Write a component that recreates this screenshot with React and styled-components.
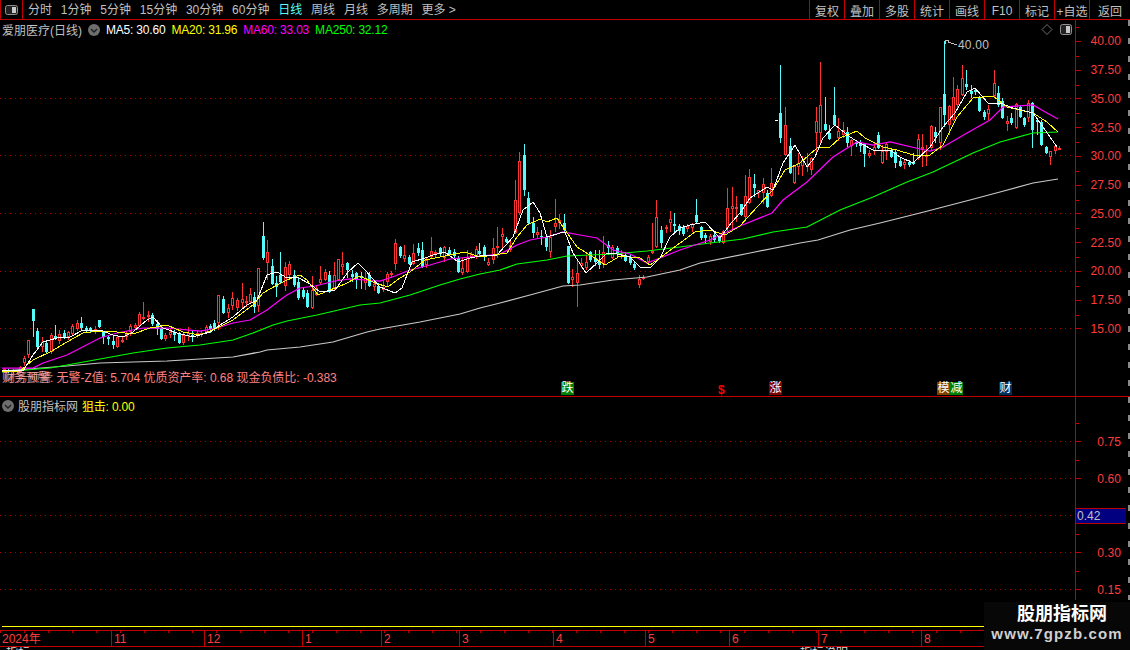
import React from 'react';
import styled, { createGlobalStyle } from 'styled-components';

const RED = '#c00000';
const TEXT_RED = '#ff3c3c';
const GREY = '#c0c0c0';

const GlobalStyle = createGlobalStyle`
  html, body {
    margin: 0;
    background: #000;
    overflow: hidden;
  }
  body {
    font-family: "Liberation Sans", "Noto Sans CJK SC", sans-serif;
    font-size: 12px;
  }
`;

const Page = styled.div`
  width: 1130px;
  height: 650px;
  position: relative;
  overflow: hidden;
  background: #000;
  color: ${GREY};
`;

const Toolbar = styled.div`
  display: flex;
  align-items: stretch;
  height: 19px;
  border-bottom: 1px solid ${RED};
`;

const ToggleCell = styled.div`
  width: 23px;
  display: flex;
  align-items: center;
  justify-content: center;
  border-right: 1px solid ${RED};
  border-left: 1px solid ${RED};
  box-sizing: border-box;
  margin-right: 5px;
`;

const Tabs = styled.div`
  display: flex;
  align-items: center;
  gap: 8.8px;
  flex: 1;
  padding-top: 2px;
`;

const Tab = styled.span`
  line-height: 17px;
  white-space: nowrap;
  color: ${p => (p.$active ? '#54fcfc' : GREY)};
`;

const ToolButton = styled.div`
  width: 35px;
  box-sizing: border-box;
  display: flex;
  align-items: center;
  justify-content: center;
  padding-top: 2px;
  border-left: 1px solid ${RED};
  white-space: nowrap;
  &:last-child {
    width: 41px;
  }
`;

const PanelRow = styled.div`
  display: flex;
  height: ${p => p.$height}px;
  border-bottom: ${p => (p.$line ? `1px solid ${RED}` : 'none')};
`;

const ChartArea = styled.div`
  width: 1075px;
  position: relative;
  flex: none;
`;

const ChartSvg = styled.svg`
  display: block;
  width: 100%;
  height: 100%;
`;

const Axis = styled.div`
  flex: 1;
  box-sizing: border-box;
  display: flex;
  flex-direction: column;
  padding-top: ${p => p.$top}px;
  border-left: 1px solid ${RED};
  background: repeating-linear-gradient(to bottom, #8a8a8a 0 6px, transparent 6px 18px) right top / 2px 100% no-repeat;
`;

const AxisRow = styled.div`
  flex: none;
  height: ${p => p.$height}px;
  display: flex;
  align-items: center;
  padding-right: 9px;
  color: ${TEXT_RED};
  letter-spacing: 0.1px;
  background: linear-gradient(${RED}, ${RED}) left top / 3px 1px no-repeat;
  &::before {
    content: '';
    width: 5px;
    height: 1px;
    background: ${RED};
    margin-right: auto;
  }
`;

const CurrentRow = styled.div`
  flex: none;
  height: 37px;
  display: flex;
  align-items: center;
`;

const CurrentValue = styled.div`
  flex: 1;
  height: 16px;
  margin-right: 4px;
  box-sizing: border-box;
  line-height: 14px;
  padding-left: 1px;
  background: #000080;
  border-top: 1px solid ${RED};
  border-bottom: 1px solid ${RED};
  color: ${GREY};
`;

const Legend = styled.div`
  position: absolute;
  left: ${p => p.$left}px;
  top: ${p => p.$top}px;
  display: flex;
  align-items: center;
  gap: ${p => p.$gap}px;
  white-space: nowrap;
  letter-spacing: -0.2px;
`;

const Title = styled.span`
  color: ${GREY};
  letter-spacing: 0;
`;

const Value = styled.span`
  color: ${p => p.$color};
`;

const FinanceLine = styled.div`
  position: absolute;
  left: 2px;
  top: 348px;
  color: #ff8080;
  white-space: nowrap;
  letter-spacing: -0.03px;
`;

const FinanceGhost = styled.span`
  position: absolute;
  left: 2px;
  top: 0;
  color: #f0d0d0;
  opacity: 0.6;
`;

const Signal = styled.span`
  position: absolute;
  left: ${p => p.$x}px;
  top: 362px;
  width: 13px;
  height: 13px;
  line-height: 13px;
  text-align: center;
  color: #fff;
  background: ${p => p.$bg};
`;

const Dollar = styled.span`
  position: absolute;
  left: 718px;
  top: 364px;
  color: #ff0000;
  font-size: 12px;
  line-height: 13px;
  font-weight: bold;
`;

const Spacer = styled.div`
  height: ${p => p.$height}px;
`;

const YellowLine = styled.div`
  height: 1px;
  margin: 0 0 3px 2px;
  background: #ffff00;
`;

const TimeAxis = styled.div`
  display: flex;
  height: 15px;
  border-top: 1px solid ${RED};
  border-bottom: 1px solid ${RED};
  color: ${TEXT_RED};
  background: repeating-linear-gradient(to right, ${RED} 0 1px, transparent 1px 24px) left top / 100% 2px no-repeat;
`;

const TimeCell = styled.div`
  box-sizing: border-box;
  flex: none;
  width: ${p => p.$width}px;
  line-height: 16px;
  padding-left: 2px;
  border-left: ${p => (p.$first ? 'none' : `1px solid ${RED}`)};
`;

const TailRow = styled.div`
  height: 3px;
  overflow: hidden;
  display: flex;
  gap: 770px;
  padding-left: 6px;
  line-height: 12px;
  color: #d8d8d8;
`;

const Watermark = styled.div`
  position: absolute;
  right: 0;
  bottom: 0;
  width: 146px;
  height: 48px;
  background: #070707;
  display: flex;
  flex-direction: column;
  align-items: center;
  font-weight: bold;
`;

const WatermarkName = styled.div`
  color: #fff;
  font-size: 18px;
  line-height: 22px;
  margin: 1px 0 0 10px;
`;

const WatermarkUrl = styled.div`
  color: #d0d0d0;
  font-size: 15px;
  line-height: 18px;
  letter-spacing: 1.1px;
`;

// [x, high, bodyTop, bodyBottom, low, up]
const candles = [
  [4, 368, 369, 372, 373, 1], [8, 369, 370, 372, 373, 0], [13, 369, 370, 372, 374, 1], [17, 370, 370, 372, 373, 1], [20, 366, 367, 372, 373, 1],
  [24, 356, 358, 363, 366, 1], [28, 340, 340, 355, 358, 1], [33, 309, 309, 321, 337, 0], [37, 328, 331, 347, 348, 0],
  [42, 337, 342, 347, 352, 1], [46, 340, 343, 352, 354, 0], [51, 333, 335, 352, 354, 1], [55, 325, 336, 339, 340, 0],
  [59, 330, 334, 341, 344, 1], [64, 330, 333, 337, 339, 0], [68, 331, 332, 337, 340, 1], [72, 324, 326, 334, 335, 1],
  [77, 320, 323, 329, 331, 1], [81, 317, 323, 328, 331, 0], [86, 326, 328, 330, 333, 0], [90, 327, 328, 331, 332, 0],
  [95, 326, 329, 330, 334, 1], [99, 320, 320, 327, 328, 0], [103, 331, 332, 337, 344, 0], [108, 335, 337, 339, 345, 0],
  [113, 336, 341, 345, 349, 0], [117, 336, 337, 347, 348, 1], [122, 337, 340, 341, 343, 1], [126, 331, 334, 337, 340, 1],
  [130, 324, 326, 332, 336, 1], [135, 323, 325, 328, 330, 1], [139, 312, 314, 326, 327, 1], [143, 302, 317, 318, 320, 1],
  [148, 311, 315, 317, 322, 1], [152, 313, 315, 324, 326, 0], [157, 320, 324, 329, 335, 0], [161, 325, 328, 339, 340, 0],
  [165, 333, 335, 339, 341, 1], [170, 329, 332, 335, 338, 1], [174, 330, 332, 335, 341, 0], [179, 332, 333, 343, 344, 0],
  [183, 332, 335, 343, 345, 1], [188, 327, 333, 336, 341, 1], [192, 330, 335, 336, 342, 0], [197, 330, 333, 335, 338, 1],
  [201, 331, 333, 335, 337, 1], [206, 325, 327, 332, 334, 1], [210, 324, 326, 329, 333, 0], [214, 320, 323, 329, 331, 0],
  [218, 295, 295, 323, 330, 1], [223, 296, 299, 313, 314, 0], [228, 304, 308, 313, 318, 1], [232, 292, 298, 306, 310, 1],
  [237, 298, 300, 308, 311, 1], [242, 283, 299, 303, 308, 1], [246, 296, 301, 303, 307, 1], [250, 288, 294, 302, 304, 1],
  [254, 292, 297, 307, 313, 0], [258, 268, 268, 306, 312, 1], [263, 222, 236, 258, 260, 0], [267, 240, 252, 263, 280, 1],
  [272, 259, 266, 284, 285, 0], [276, 276, 283, 287, 297, 0], [280, 252, 275, 282, 284, 0], [285, 262, 267, 286, 291, 1],
  [289, 261, 264, 275, 280, 1], [294, 270, 275, 285, 287, 0], [298, 277, 282, 298, 300, 0], [303, 288, 290, 297, 299, 0],
  [307, 290, 293, 307, 308, 0], [312, 276, 290, 308, 309, 1], [316, 285, 288, 295, 296, 1], [320, 266, 279, 283, 284, 1],
  [325, 269, 272, 280, 281, 1], [329, 271, 275, 292, 293, 0], [334, 262, 275, 288, 290, 1], [338, 259, 259, 280, 281, 1],
  [342, 252, 264, 267, 275, 1], [347, 262, 263, 270, 278, 0], [352, 270, 274, 277, 282, 0], [356, 272, 273, 280, 289, 0],
  [361, 272, 276, 278, 289, 0], [365, 272, 278, 283, 290, 1], [369, 272, 275, 286, 287, 0], [374, 282, 284, 287, 291, 1],
  [378, 283, 286, 293, 294, 0], [383, 280, 287, 290, 292, 1], [387, 272, 274, 282, 286, 1], [391, 271, 273, 275, 278, 1],
  [395, 239, 243, 264, 270, 1], [400, 246, 247, 256, 258, 0], [404, 245, 255, 259, 262, 1], [409, 255, 257, 264, 265, 0],
  [413, 244, 253, 264, 265, 1], [418, 243, 248, 253, 256, 0], [422, 242, 250, 267, 268, 0], [426, 258, 260, 265, 268, 1],
  [431, 237, 251, 257, 259, 1], [435, 250, 252, 254, 258, 1], [440, 247, 248, 254, 257, 0], [444, 246, 247, 258, 262, 1],
  [449, 247, 250, 254, 256, 0], [454, 249, 252, 256, 258, 0], [458, 256, 258, 272, 273, 0], [462, 258, 268, 273, 275, 1],
  [467, 250, 257, 272, 273, 1], [471, 252, 254, 257, 259, 1], [476, 246, 249, 257, 259, 1], [479, 243, 251, 254, 257, 0],
  [484, 245, 247, 257, 261, 0], [488, 258, 262, 265, 266, 1], [493, 238, 248, 260, 264, 1], [497, 227, 246, 248, 258, 1],
  [502, 228, 234, 237, 248, 1], [506, 237, 239, 242, 243, 0], [510, 240, 245, 250, 252, 1], [515, 180, 200, 233, 234, 1],
  [519, 152, 161, 213, 215, 1], [524, 144, 155, 190, 196, 0], [528, 192, 198, 223, 224, 0], [533, 217, 223, 233, 238, 0],
  [537, 227, 232, 235, 238, 1], [541, 230, 236, 237, 245, 0], [546, 235, 237, 247, 251, 0], [550, 230, 237, 252, 258, 1],
  [555, 199, 223, 227, 232, 1], [559, 214, 220, 223, 229, 1], [564, 214, 223, 230, 232, 0], [568, 246, 246, 283, 284, 0],
  [572, 269, 277, 280, 287, 1], [577, 260, 273, 283, 307, 1], [581, 258, 263, 266, 268, 1], [586, 255, 262, 268, 270, 1],
  [590, 251, 252, 260, 262, 0], [595, 250, 258, 262, 266, 0], [599, 250, 262, 265, 269, 0], [603, 236, 252, 264, 268, 1],
  [608, 241, 245, 248, 255, 0], [612, 245, 247, 258, 259, 1], [617, 246, 248, 254, 257, 0], [621, 250, 253, 255, 259, 1],
  [625, 252, 255, 261, 262, 0], [630, 254, 257, 263, 265, 0], [634, 262, 264, 268, 270, 0], [639, 275, 279, 285, 288, 1],
  [643, 275, 277, 279, 280, 1], [648, 255, 257, 262, 265, 1], [652, 223, 251, 253, 254, 1], [656, 200, 217, 247, 248, 1],
  [661, 226, 230, 243, 248, 0], [666, 225, 227, 229, 233, 1], [670, 211, 219, 223, 232, 1], [674, 213, 224, 226, 232, 0],
  [679, 224, 226, 231, 235, 0], [683, 225, 227, 234, 236, 0], [687, 224, 226, 229, 232, 1], [692, 223, 224, 228, 232, 1],
  [696, 199, 215, 222, 223, 0], [701, 226, 227, 238, 240, 0], [705, 233, 235, 238, 243, 0], [710, 234, 236, 242, 245, 1],
  [714, 232, 235, 240, 242, 0], [719, 235, 237, 241, 243, 0], [723, 230, 231, 243, 244, 1], [727, 188, 208, 228, 232, 1],
  [732, 187, 206, 209, 230, 1], [736, 196, 207, 209, 222, 1], [741, 204, 204, 215, 216, 0], [745, 175, 196, 217, 219, 1],
  [749, 169, 177, 203, 204, 1], [754, 174, 184, 188, 197, 0], [758, 190, 190, 193, 198, 1], [763, 178, 184, 193, 204, 1],
  [767, 190, 193, 207, 208, 0], [771, 168, 183, 196, 197, 1], [780, 65, 113, 138, 143, 0], [785, 107, 125, 155, 156, 1],
  [790, 138, 146, 173, 174, 0], [794, 165, 166, 183, 184, 1], [798, 153, 163, 167, 175, 1], [802, 156, 160, 166, 176, 1],
  [807, 153, 165, 167, 172, 1], [811, 157, 158, 170, 175, 1], [816, 107, 121, 133, 155, 1], [820, 62, 105, 133, 145, 1],
  [825, 97, 124, 130, 131, 0], [829, 125, 133, 139, 140, 0], [834, 87, 115, 125, 126, 0], [838, 118, 131, 138, 141, 1],
  [843, 122, 130, 135, 138, 1], [847, 127, 132, 143, 147, 0], [851, 139, 140, 146, 156, 1], [856, 140, 142, 144, 147, 0],
  [860, 140, 143, 146, 152, 0], [864, 143, 144, 154, 167, 0], [869, 150, 153, 156, 158, 1], [874, 143, 147, 151, 155, 1],
  [878, 132, 135, 148, 149, 0], [882, 145, 151, 163, 164, 1], [886, 143, 144, 152, 160, 1], [891, 148, 150, 157, 158, 0],
  [895, 150, 152, 163, 168, 0], [900, 158, 161, 166, 167, 0], [904, 160, 162, 165, 169, 1], [909, 160, 162, 165, 167, 0],
  [913, 153, 162, 164, 165, 0], [918, 134, 139, 158, 160, 1], [922, 134, 147, 149, 167, 1], [926, 145, 155, 157, 166, 1],
  [931, 125, 126, 148, 150, 1], [935, 127, 132, 137, 143, 0], [940, 107, 107, 143, 150, 1], [944, 41, 94, 115, 127, 0],
  [949, 105, 106, 125, 135, 1], [953, 77, 97, 120, 121, 1], [957, 85, 89, 105, 108, 1], [962, 65, 78, 95, 96, 1],
  [966, 70, 84, 87, 90, 0], [971, 85, 91, 94, 98, 0], [975, 88, 90, 92, 95, 0], [979, 96, 97, 111, 112, 0],
  [984, 110, 112, 117, 120, 0], [988, 105, 109, 114, 120, 1], [994, 70, 83, 96, 97, 1], [998, 86, 93, 105, 107, 0],
  [1002, 98, 101, 118, 119, 0], [1007, 116, 121, 124, 131, 1], [1011, 113, 118, 123, 125, 0], [1016, 103, 104, 128, 129, 1],
  [1020, 105, 107, 117, 118, 0], [1024, 117, 118, 125, 127, 0], [1028, 100, 103, 118, 122, 1], [1032, 102, 103, 130, 148, 0],
  [1037, 118, 120, 122, 135, 0], [1041, 120, 122, 145, 146, 0], [1046, 146, 147, 153, 154, 0], [1050, 151, 151, 157, 165, 1],
  [1055, 145, 146, 151, 154, 1], [1059, 146, 148, 149, 150, 1],
];

const ma5 = '2,370 23,371 33,355 43,342 57,338 70,337 83,330 100,330 113,335 123,337 133,332 147,320 153,317 163,328 177,333 193,337 210,332 220,325 233,317 247,305 257,300 267,275 277,272 287,278 297,277 310,284 320,292 335,290 348,272 358,263 365,270 380,287 395,293 402,288 412,262 425,258 433,255 445,252 458,262 470,258 480,256 497,255 513,237 523,210 533,202 540,213 547,237 560,233 565,232 573,253 586,273 597,263 607,253 613,253 630,257 640,267 650,268 660,258 670,237 680,228 690,225 705,222 720,238 732,222 740,213 750,198 767,187 773,190 783,163 795,145 807,167 815,157 823,138 835,125 850,137 860,143 873,150 890,150 900,157 913,163 930,147 943,127 955,113 967,92 975,88 988,103 1000,103 1013,108 1033,113 1043,127 1057,147';
const ma20 = '2,372 20,371 33,360 50,352 67,342 83,333 100,331 117,332 133,334 150,328 167,325 183,332 200,335 217,328 233,320 253,305 263,293 277,285 287,280 300,275 307,280 318,295 330,290 345,284 360,276 375,283 388,287 397,280 410,272 425,260 445,256 465,252 480,257 507,253 517,237 527,225 540,219 547,222 557,218 563,227 577,247 593,257 605,265 620,256 640,258 650,265 660,258 680,243 695,232 710,230 725,235 740,226 757,207 773,190 785,170 800,163 817,148 830,147 840,138 857,131 865,138 883,147 897,150 913,155 930,155 943,145 957,117 973,98 993,96 1007,107 1033,113 1047,122 1058,132';
const ma60 = '2,368 33,368 43,363 67,355 100,338 117,333 143,328 167,328 200,331 217,328 233,323 250,320 267,310 280,300 287,295 300,288 315,286 335,281 350,279 380,281 395,276 410,270 430,265 450,259 480,256 500,254 517,245 530,240 547,237 563,232 580,235 597,238 613,250 630,254 647,263 660,258 680,250 710,240 740,226 772,213 783,200 807,182 833,157 857,142 873,145 890,142 920,149 930,151 943,147 967,133 990,120 1003,107 1033,105 1047,113 1058,119';
const ma120 = '2,372 50,368 67,365 100,359 133,353 167,348 200,345 233,340 253,333 273,325 287,321 317,315 360,305 380,303 410,295 440,285 460,279 480,274 500,270 517,264 547,260 567,256 613,254 647,251 680,247 710,243 743,239 773,232 807,227 840,210 873,197 907,182 933,172 973,153 1000,142 1033,133 1058,132';
const ma250 = '2,371 67,366 100,363 133,362 167,361 200,359 233,357 260,352 267,350 300,347 333,342 367,332 380,329 420,322 460,314 480,308 500,303 530,295 563,286 580,285 613,280 647,277 680,270 700,263 750,253 800,243 818,240 850,230 880,223 920,213 970,200 1000,192 1033,183 1058,179';

const upperGrid = [98, 155, 213, 271, 328];
const lowerGrid = [441, 478, 515, 552, 589];
const upperLabels = ['40.00', '37.50', '35.00', '32.50', '30.00', '27.50', '25.00', '22.50', '20.00', '17.50', '15.00'];
const months = [
  ['2024年', 111], ['11', 93], ['12', 98], ['1', 79], ['2', 78], ['3', 94],
  ['4', 92], ['5', 84], ['6', 89], ['7', 103], ['8', 209],
];
const toolTabs = ['分时', '1分钟', '5分钟', '15分钟', '30分钟', '60分钟', '日线', '周线', '月线', '多周期', '更多 >'];
const toolButtons = ['复权', '叠加', '多股', '统计', '画线', 'F10', '标记', '+自选', '返回'];

function PanelIcon() {
  return (
    <svg width="13" height="10" viewBox="0 0 13 10">
      <rect x="0.5" y="0.5" width="12" height="9" rx="2" fill="#222" stroke="#909090" />
      <rect x="7" y="2" width="4" height="6" fill="#c8c8c8" />
    </svg>
  );
}

function CircleIcon() {
  return (
    <svg width="12" height="12" viewBox="0 0 12 12">
      <circle cx="6" cy="6" r="6" fill="#6e6e6e" />
      <path d="M3 5l3 3 3-3" fill="none" stroke="#1c1c1c" strokeWidth="1.4" />
    </svg>
  );
}

function Candle({ x, high, top, bottom, low, up }) {
  const color = up ? '#ff3232' : '#54fcfc';
  return (
    <g shapeRendering="crispEdges">
      <rect x={x} y={high} width="1" height={low - high} fill={color} />
      {up ? (
        <rect x={x - 0.5} y={top + 0.5} width="2" height={Math.max(bottom - top - 1, 1)} fill="#000" stroke={color} />
      ) : (
        <rect x={x - 1} y={top} width="3" height={bottom - top} fill={color} />
      )}
    </g>
  );
}

function MaLine({ points, color }) {
  return <polyline points={points} fill="none" stroke={color} strokeWidth="1" shapeRendering="crispEdges" />;
}

function SlowLine({ points, color }) {
  return <polyline points={points} fill="none" stroke={color} strokeWidth="1.25" />;
}

function DottedLine({ y }) {
  return <line x1="0" x2="1075" y1={y + 0.5} y2={y + 0.5} stroke="#a80000" strokeDasharray="1 4" shapeRendering="crispEdges" />;
}

export default function App() {
  return (
    <Page>
      <GlobalStyle />
      <Toolbar>
        <ToggleCell>
          <PanelIcon />
        </ToggleCell>
        <Tabs>
          {toolTabs.map(t => (
            <Tab key={t} $active={t === '日线'}>{t}</Tab>
          ))}
        </Tabs>
        {toolButtons.map(b => (
          <ToolButton key={b}>{b}</ToolButton>
        ))}
      </Toolbar>

      <PanelRow $height={376} $line>
        <ChartArea>
          <ChartSvg viewBox="0 20 1075 376">
            {upperGrid.map(y => <DottedLine key={y} y={y} />)}
            {candles.map(c => (
              <Candle key={c[0]} x={c[0]} high={c[1]} top={c[2]} bottom={c[3]} low={c[4]} up={c[5]} />
            ))}
            <rect x="775" y="120" width="3" height="1" fill="#fff" />
            <SlowLine points={ma250} color="#c8c8c8" />
            <SlowLine points={ma120} color="#00ff00" />
            <SlowLine points={ma60} color="#ff00ff" />
            <MaLine points={ma20} color="#ffff00" />
            <MaLine points={ma5} color="#ffffff" />
            <polyline points="945,44 945,40 948,40 948,42 957,45" fill="none" stroke="#c0c0c0" shapeRendering="crispEdges" />
            <text x="958" y="49" fill="#c0c0c0" fontSize="12" letterSpacing="0.2">40.00</text>
            <path d="M1047 24.5l5 5-5 5-5-5z" fill="none" stroke="#707070" />
            <g transform="translate(1060 24)">
              <rect x="0.5" y="0.5" width="11" height="10" rx="2" fill="#222" stroke="#909090" />
              <rect x="6" y="2" width="4" height="7" fill="#c8c8c8" />
            </g>
          </ChartSvg>
          <Legend $left={2} $top={1} $gap={6}>
            <Title>爱朋医疗(日线)</Title>
            <CircleIcon />
            <Value $color="#ffffff">MA5: 30.60</Value>
            <Value $color="#ffff00">MA20: 31.96</Value>
            <Value $color="#ff00ff">MA60: 33.03</Value>
            <Value $color="#00ff00">MA250: 32.12</Value>
          </Legend>
          <FinanceLine>
            财务预警: 无警-Z值: 5.704 优质资产率: 0.68 现金负债比: -0.383
            <FinanceGhost aria-hidden="true">财务预警</FinanceGhost>
          </FinanceLine>
          <Signal $x={561} $bg="#008000">跌</Signal>
          <Dollar>$</Dollar>
          <Signal $x={769} $bg="#800000">涨</Signal>
          <Signal $x={937} $bg="#804000">模</Signal>
          <Signal $x={950} $bg="#008000">减</Signal>
          <Signal $x={999} $bg="#003060">财</Signal>
        </ChartArea>
        <Axis $top={7}>
          {upperLabels.map(l => (
            <AxisRow key={l} $height={28.75}>{l}</AxisRow>
          ))}
        </Axis>
      </PanelRow>

      <PanelRow $height={203}>
        <ChartArea>
          <ChartSvg viewBox="0 397 1075 203">
            {lowerGrid.map(y => <DottedLine key={y} y={y} />)}
          </ChartSvg>
          <Legend $left={2} $top={0} $gap={4}>
            <CircleIcon />
            <Title>股朋指标网</Title>
            <Value $color="#ffff00">狙击: 0.00</Value>
          </Legend>
        </ChartArea>
        <Axis $top={26}>
          <AxisRow $height={37}>0.75</AxisRow>
          <AxisRow $height={37}>0.60</AxisRow>
          <CurrentRow>
            <CurrentValue>0.42</CurrentValue>
          </CurrentRow>
          <AxisRow $height={37}>0.30</AxisRow>
          <AxisRow $height={37}>0.15</AxisRow>
        </Axis>
      </PanelRow>

      <Spacer $height={26} />
      <YellowLine />
      <TimeAxis>
        {months.map((m, i) => (
          <TimeCell key={m[0]} $width={m[1]} $first={i === 0}>{m[0]}</TimeCell>
        ))}
      </TimeAxis>
      <TailRow>
        <span>指标</span>
        <span>指标说明</span>
      </TailRow>

      <Watermark>
        <WatermarkName>股朋指标网</WatermarkName>
        <WatermarkUrl>www.7gpzb.com</WatermarkUrl>
      </Watermark>
    </Page>
  );
}
